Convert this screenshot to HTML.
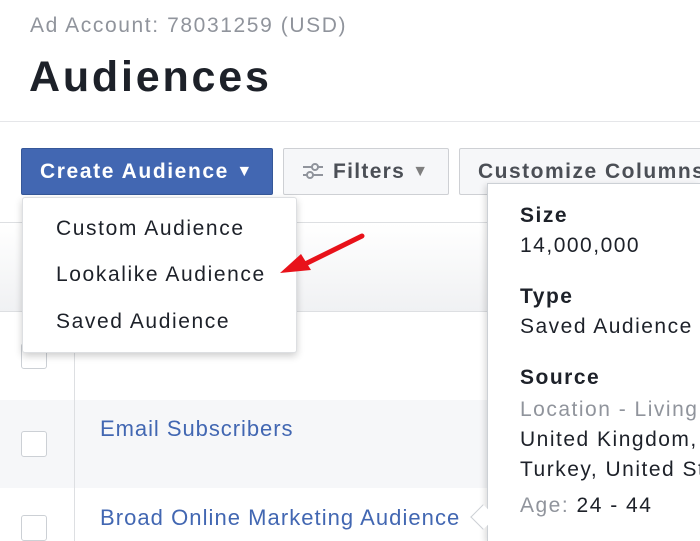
<!DOCTYPE html>
<html><head><style>
*{margin:0;padding:0;box-sizing:border-box}
html,body{width:700px;height:541px;overflow:hidden}
body{background:#fff;font-family:"Liberation Sans",Arial,sans-serif;position:relative}
.a{position:absolute}
</style></head><body>
<div class="a" style="left:30px;top:14px;font-size:21px;color:#90949c;letter-spacing:1.6px">Ad Account: 78031259 (USD)</div>
<div class="a" style="left:29px;top:53px;font-size:43px;font-weight:bold;color:#1d2129;letter-spacing:2.8px">Audiences</div>
<div class="a" style="left:0;top:121px;width:700px;height:1px;background:#e5e6e9"></div>
<div class="a" style="left:0;top:222px;width:700px;height:90px;background:linear-gradient(#fff,#f0f1f3);border-top:1px solid #dddfe2;border-bottom:1px solid #dddfe2"></div>
<div class="a" style="left:0;top:400px;width:700px;height:88px;background:#f6f7f9"></div>
<div class="a" style="left:74px;top:312px;width:1px;height:229px;background:#dddfe2"></div>
<div class="a" style="left:21px;top:343px;width:26px;height:26px;border:1px solid #ccd0d5;border-radius:3px;background:#fff"></div>
<div class="a" style="left:21px;top:431px;width:26px;height:26px;border:1px solid #ccd0d5;border-radius:3px;background:#fff"></div>
<div class="a" style="left:21px;top:515px;width:26px;height:26px;border:1px solid #ccd0d5;border-radius:3px;background:#fff"></div>
<div class="a" style="left:100px;top:416px;font-size:22px;color:#4267b2;letter-spacing:0.95px">Email Subscribers</div>
<div class="a" style="left:100px;top:505px;font-size:22px;color:#4267b2;letter-spacing:1.05px;white-space:nowrap">Broad Online Marketing Audience</div>
<div class="a" style="left:21px;top:148px;width:252px;height:47px;background:#4267b2;border:1px solid #365899;border-radius:2px;color:#fff;font-weight:bold;font-size:21px;padding:11px 0 0 18px;letter-spacing:1.6px;white-space:nowrap">Create Audience <span style="font-size:16px;vertical-align:2px">▼</span></div>
<div class="a" style="left:283px;top:148px;width:166px;height:47px;background:#f6f7f9;border:1px solid #ced0d4;border-radius:2px;color:#4b4f56;font-weight:bold;font-size:21px;padding:11px 0 0 49px;letter-spacing:1.3px;white-space:nowrap">Filters <span style="font-size:16px;vertical-align:2px;color:#7f7f7f">▼</span></div>
<svg class="a" style="left:301px;top:161px" width="24" height="20"><g stroke="#90949c" stroke-width="2"><line x1="2" y1="6" x2="22" y2="6"/><line x1="2" y1="14" x2="22" y2="14"/></g><circle cx="14" cy="6" r="3" fill="#f6f7f9" stroke="#90949c" stroke-width="2"/><circle cx="9" cy="14" r="3" fill="#f6f7f9" stroke="#90949c" stroke-width="2"/></svg>
<div class="a" style="left:459px;top:148px;width:241px;height:47px;overflow:hidden;background:#f6f7f9;border:1px solid #ced0d4;border-right:none;border-radius:2px 0 0 2px;color:#4b4f56;font-weight:bold;font-size:21px;padding:11px 0 0 18px;white-space:nowrap;letter-spacing:1.5px">Customize Columns</div>
<div class="a" style="left:22px;top:197px;width:275px;height:156px;background:#fff;border:1px solid #dddfe2;border-radius:3px;box-shadow:0 3px 8px rgba(0,0,0,.2)">
<div class="a" style="left:33px;top:19px;font-size:21px;color:#1d2129;white-space:nowrap;letter-spacing:1.6px">Custom Audience</div>
<div class="a" style="left:33px;top:65px;font-size:21px;color:#1d2129;white-space:nowrap;letter-spacing:1.6px">Lookalike Audience</div>
<div class="a" style="left:33px;top:112px;font-size:21px;color:#1d2129;white-space:nowrap;letter-spacing:1.6px">Saved Audience</div>
</div>
<svg class="a" style="left:275px;top:228px" width="95" height="50"><line x1="87" y1="8" x2="22" y2="40" stroke="#e8121a" stroke-width="5" stroke-linecap="round"/><polygon points="5,45 26,26 36,42" fill="#e8121a"/></svg>
<div class="a" style="left:487px;top:183px;width:213px;height:358px;background:#fff;border:1px solid #ccd0d5;border-right:none;border-bottom:none;box-shadow:-2px 2px 6px rgba(0,0,0,.15)"></div>
<div class="a" style="left:474px;top:508px;width:18px;height:18px;background:#fff;border-left:1px solid #ccd0d5;border-bottom:1px solid #ccd0d5;transform:rotate(45deg)"></div>
<div class="a" style="left:520px;top:201px;width:180px;overflow:hidden;font-size:21px;line-height:30px;color:#1d2129;white-space:nowrap;letter-spacing:1.5px">
<div style="font-weight:bold">Size</div><div>14,000,000</div>
<div style="font-weight:bold;margin-top:21px">Type</div><div>Saved Audience</div>
<div style="font-weight:bold;margin-top:21px">Source</div>
<div style="color:#90949c;margin-top:2px">Location - Living</div>
<div>United Kingdom,</div><div>Turkey, United States</div>
<div style="margin-top:6px"><span style="color:#90949c">Age:</span> 24 - 44</div>
</div>
</body></html>
